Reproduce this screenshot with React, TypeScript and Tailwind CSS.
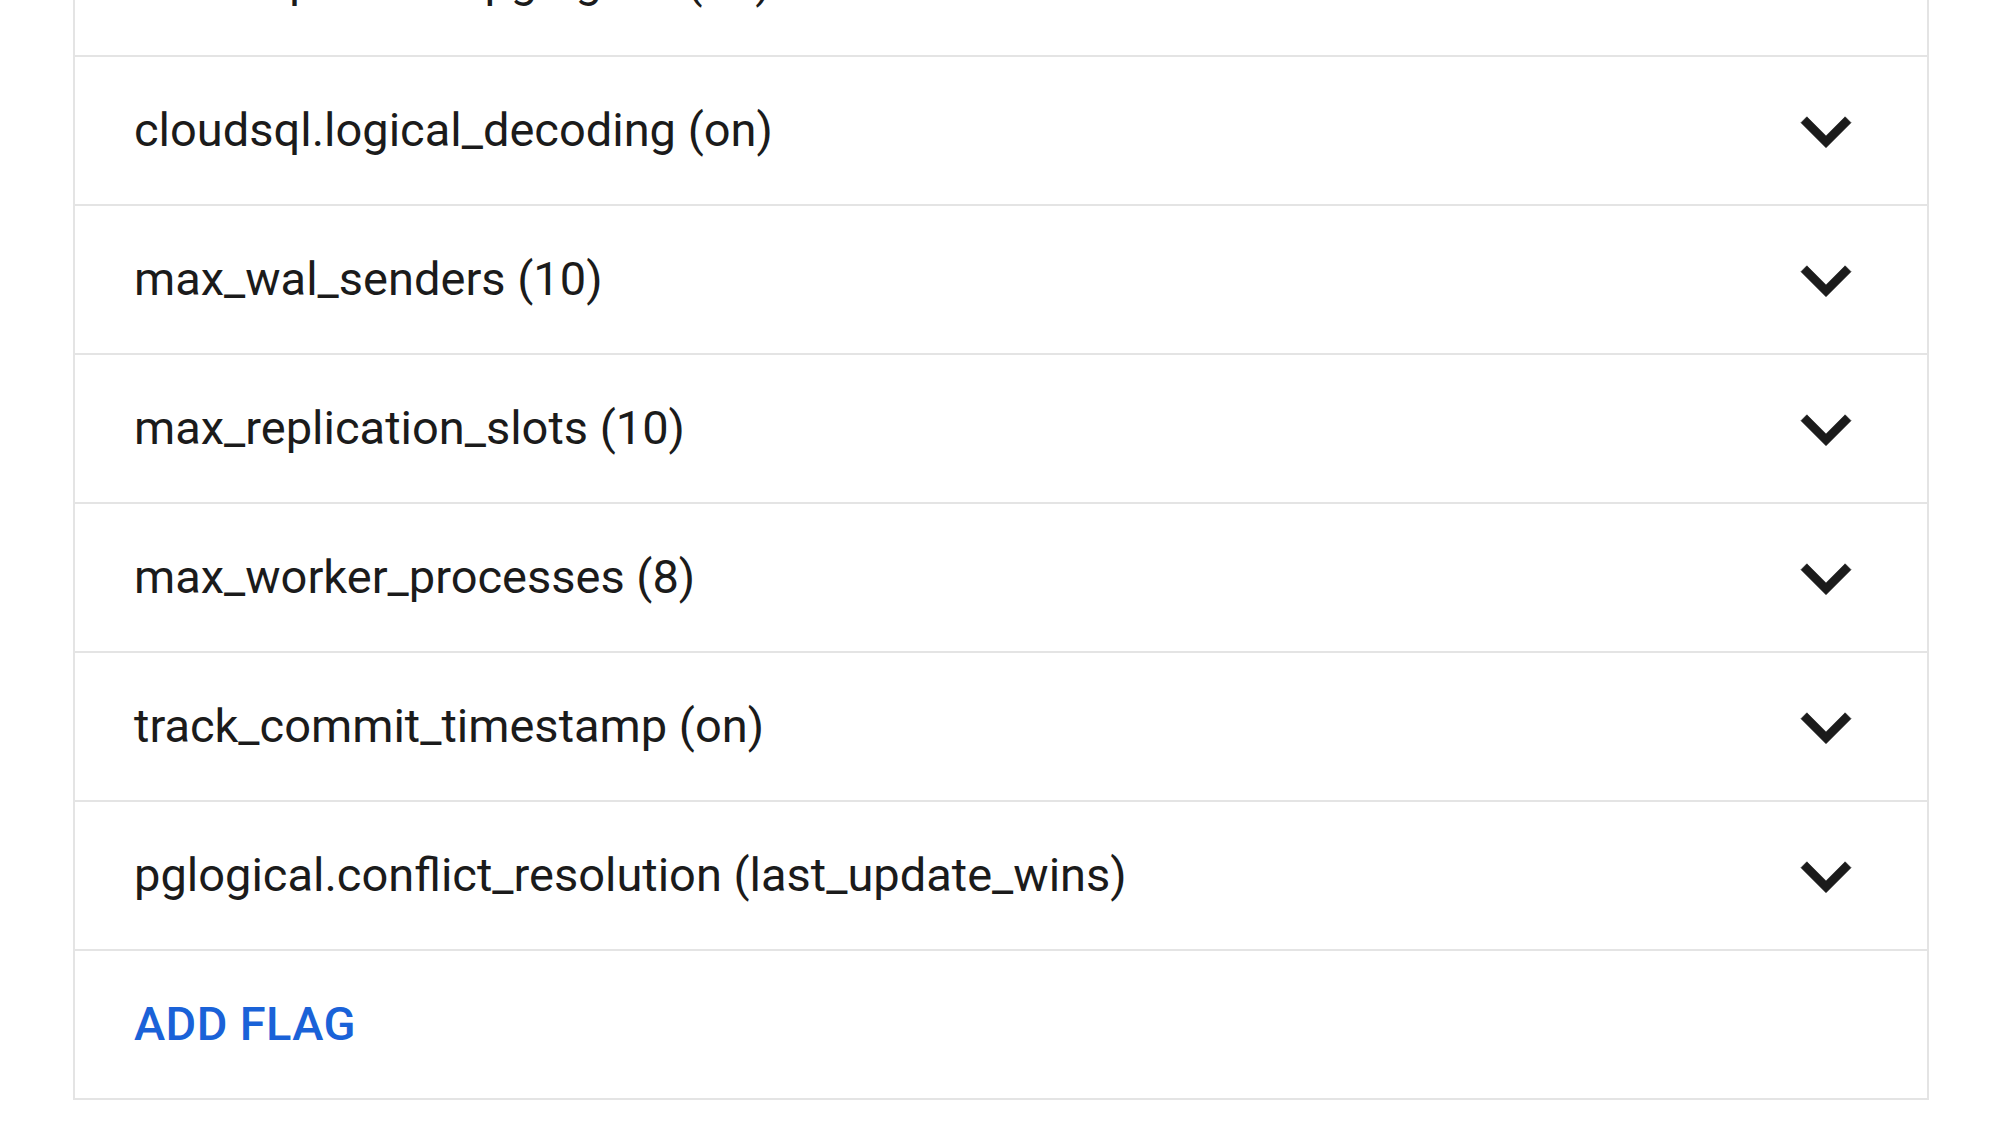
import React from "react";

const flags = [
  "cloudsql.enable_pglogical (on)",
  "cloudsql.logical_decoding (on)",
  "max_wal_senders (10)",
  "max_replication_slots (10)",
  "max_worker_processes (8)",
  "track_commit_timestamp (on)",
  "pglogical.conflict_resolution (last_update_wins)",
];

function ExpandMore() {
  return (
    <svg viewBox="0 0 24 24" className="w-[100px] h-[100px] shrink-0" fill="#1b1b1b">
      <path d="M16.59 8.59L12 13.17 7.41 8.59 6 10l6 6 6-6z" stroke="#1b1b1b" strokeWidth="0.15" />
    </svg>
  );
}

export default function App() {
  return (
    <div
      className="w-[1999px] h-[1123px] overflow-hidden bg-white"
      style={{ fontFamily: "Roboto, 'Liberation Sans', sans-serif" }}
    >
      <div className="ml-[73px] w-[1856px] -mt-[94px] border-2 border-[#e4e4e4] bg-white">
        {flags.map((flag) => (
          <div
            key={flag}
            className="h-[149px] flex items-center justify-between pl-[59px] pr-[51px] border-b-2 border-[#e4e4e4]"
          >
            <span className="text-[47px] text-[#1b1b1b] leading-none -mt-[2px]">{flag}</span>
            <ExpandMore />
          </div>
        ))}
        <div className="h-[147px] flex items-center pl-[59px]">
          <button className="text-[47px] font-medium tracking-[0.4px] text-[#1a62d8] leading-none -mt-[2px]">
            ADD FLAG
          </button>
        </div>
      </div>
    </div>
  );
}
